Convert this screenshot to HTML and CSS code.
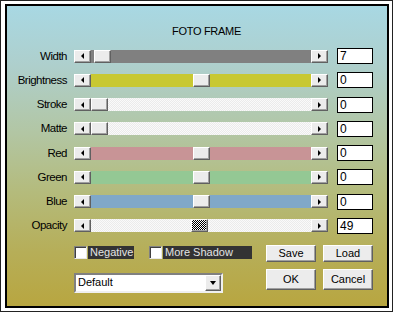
FILE: index.html
```html
<!DOCTYPE html>
<html>
<head>
<meta charset="utf-8">
<link rel="stylesheet" href="styles.css">
</head>
<body>
<div class="outer">
  <div class="frame">
    <div class="title">FOTO FRAME</div>
    <div class="rows">
      <div class="row">
        <span class="label">Width</span>
        <div class="sb"><span class="arrow"><i class="tri-l"></i></span><div class="track t-gray"><span class="thumb" style="margin-left:3px"></span></div><span class="arrow"><i class="tri-r"></i></span></div>
        <span class="val">7</span>
      </div>
      <div class="row">
        <span class="label">Brightness</span>
        <div class="sb"><span class="arrow"><i class="tri-l"></i></span><div class="track t-yellow"><span class="thumb" style="margin-left:102px"></span></div><span class="arrow"><i class="tri-r"></i></span></div>
        <span class="val">0</span>
      </div>
      <div class="row">
        <span class="label">Stroke</span>
        <div class="sb"><span class="arrow"><i class="tri-l"></i></span><div class="track t-light"><span class="thumb" style="margin-left:0px"></span></div><span class="arrow"><i class="tri-r"></i></span></div>
        <span class="val">0</span>
      </div>
      <div class="row">
        <span class="label">Matte</span>
        <div class="sb"><span class="arrow"><i class="tri-l"></i></span><div class="track t-light"><span class="thumb" style="margin-left:0px"></span></div><span class="arrow"><i class="tri-r"></i></span></div>
        <span class="val">0</span>
      </div>
      <div class="row">
        <span class="label">Red</span>
        <div class="sb"><span class="arrow"><i class="tri-l"></i></span><div class="track t-red"><span class="thumb" style="margin-left:102px"></span></div><span class="arrow"><i class="tri-r"></i></span></div>
        <span class="val">0</span>
      </div>
      <div class="row">
        <span class="label">Green</span>
        <div class="sb"><span class="arrow"><i class="tri-l"></i></span><div class="track t-green"><span class="thumb" style="margin-left:102px"></span></div><span class="arrow"><i class="tri-r"></i></span></div>
        <span class="val">0</span>
      </div>
      <div class="row">
        <span class="label">Blue</span>
        <div class="sb"><span class="arrow"><i class="tri-l"></i></span><div class="track t-blue"><span class="thumb" style="margin-left:102px"></span></div><span class="arrow"><i class="tri-r"></i></span></div>
        <span class="val">0</span>
      </div>
      <div class="row">
        <span class="label">Opacity</span>
        <div class="sb"><span class="arrow"><i class="tri-l"></i></span><div class="track t-light"><span class="thumb checker" style="margin-left:100px"></span></div><span class="arrow"><i class="tri-r"></i></span></div>
        <span class="val">49</span>
      </div>
    </div>
    <div class="bottom">
      <div class="left-col">
        <div class="checks">
          <span class="cb"></span><span class="cb-label neg">Negative</span>
          <span class="cb second"></span><span class="cb-label shadow">More Shadow</span>
        </div>
        <div class="dropdown">
          <span class="dd-text">Default</span>
          <span class="dd-btn"><i class="tri-d"></i></span>
        </div>
      </div>
      <div class="buttons">
        <span class="btn small">Save</span>
        <span class="btn small">Load</span>
        <span class="btn big">OK</span>
        <span class="btn big">Cancel</span>
      </div>
    </div>
  </div>
</div>
</body>
</html>
```
FILE: styles.css
```css
* { box-sizing: border-box; }
body {
  margin: 0;
  background: #fff;
  font-family: "Liberation Sans", Arial, sans-serif;
  font-size: 11px;
  color: #000;
}
.outer {
  width: 393px;
  height: 312px;
  border: 1px solid #222;
  padding: 3px 3px 3px 4px;
}
.frame {
  width: 384px;
  height: 304px;
  border: 2px solid #000;
  background: linear-gradient(180deg, #a8d8e3 0%, #aecfcc 20%, #b2c6a4 42%, #b4bb7c 62%, #b6ae58 82%, #b8a640 100%);
  padding-top: 19px;
}
.title {
  height: 13px;
  line-height: 13px;
  text-align: center;
  padding-left: 19px;
  letter-spacing: -0.3px;
}
.rows {
  margin-top: 10px;
  display: flex;
  flex-direction: column;
  gap: 8.29px;
}
.row {
  height: 16px;
  display: flex;
  align-items: center;
}
.label {
  width: 60px;
  text-align: right;
  font-size: 11.5px;
  letter-spacing: -0.5px;
  line-height: 13px;
}
.sb {
  margin-left: 7px;
  width: 254px;
  height: 13px;
  display: flex;
}
.arrow, .thumb, .dd-btn, .btn {
  background: #ececec;
  border: 1px solid;
  border-color: #fff #606060 #606060 #fff;
  box-shadow: inset -1px -1px #a0a0a0;
}
.arrow {
  width: 17px;
  height: 13px;
  display: flex;
  align-items: center;
  justify-content: center;
  flex: none;
}
.tri-l {
  width: 0; height: 0;
  border-top: 3px solid transparent;
  border-bottom: 3px solid transparent;
  border-right: 3px solid #000;
}
.tri-r {
  width: 0; height: 0;
  border-top: 3px solid transparent;
  border-bottom: 3px solid transparent;
  border-left: 3px solid #000;
}
.track {
  flex: 1;
  height: 13px;
  display: flex;
}
.thumb {
  width: 17px;
  height: 13px;
  flex: none;
}
.thumb.checker {
  background: repeating-conic-gradient(#000 0 25%, #fff 0 50%) 0 0 / 2px 2px;
}
.t-gray { background: #808080; }
.t-yellow { background: #c8c832; }
.t-light { background: repeating-conic-gradient(#fafafa 0 25%, #ebebeb 0 50%) 0 0 / 2px 2px; }
.t-red { background: #c89496; }
.t-green { background: #94c894; }
.t-blue { background: #80a8c8; }
.val {
  margin-left: 9px;
  width: 36px;
  height: 16px;
  border: 1px solid #000;
  background: #fff;
  font-size: 12px;
  line-height: 14px;
  padding-left: 2px;
}
.bottom {
  margin-top: 11px;
  padding-left: 67px;
  display: flex;
}
.left-col {
  width: 179px;
  display: flex;
  flex-direction: column;
}
.checks {
  margin-top: 1px;
  height: 13px;
  display: flex;
}
.cb {
  width: 13px;
  height: 13px;
  background: #fff;
  border: 1px solid;
  border-color: #808080 #e8e8e8 #e8e8e8 #808080;
  box-shadow: inset 1px 1px #404040;
}
.cb.second { margin-left: 15px; }
.cb-label {
  margin-left: 1px;
  height: 13px;
  line-height: 13px;
  background: #333;
  color: #e4e4e4;
  padding-left: 2px;
  white-space: nowrap;
}
.neg { width: 46px; }
.shadow { width: 89px; }
.dropdown {
  margin-top: 14px;
  width: 149px;
  height: 20px;
  background: #fff;
  border: 2px solid;
  border-color: #808080 #f0f0f0 #f0f0f0 #808080;
  display: flex;
  align-items: center;
}
.dd-text {
  padding-left: 2px;
  line-height: 13px;
}
.dd-btn {
  margin-left: auto;
  width: 16px;
  height: 16px;
  display: flex;
  align-items: center;
  justify-content: center;
}
.tri-d {
  width: 0; height: 0;
  border-left: 3.5px solid transparent;
  border-right: 3.5px solid transparent;
  border-top: 4px solid #000;
}
.buttons {
  margin-left: 13px;
  display: grid;
  grid-template-columns: 50px 50px;
  grid-template-rows: 17px 21px;
  column-gap: 7px;
  row-gap: 7px;
}
.btn {
  display: flex;
  align-items: center;
  justify-content: center;
  font-size: 11px;
  font-weight: 400;
}
```
